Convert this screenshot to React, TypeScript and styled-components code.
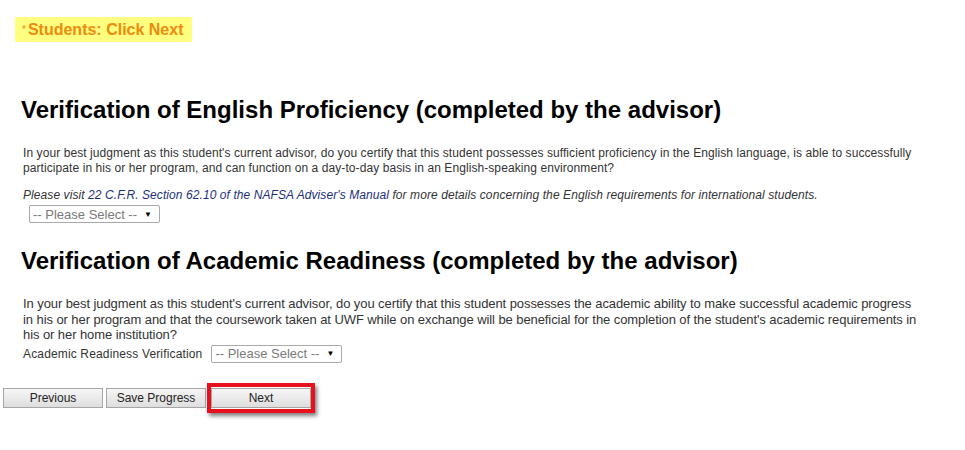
import React from "react";
import styled, { createGlobalStyle } from "styled-components";

const Global = createGlobalStyle`
  html, body { margin: 0; padding: 0; background: #fff; }
  body { font-family: "Liberation Sans", Arial, sans-serif; color: #222; }
`;

const Page = styled.div`
  width: 965px;
  height: 450px;
  box-sizing: border-box;
  padding-top: 17px;
  display: flex;
  flex-direction: column;
`;

const Banner = styled.div`
  align-self: flex-start;
  margin-left: 15px;
  height: 25px;
  width: 177px;
  box-sizing: border-box;
  padding-left: 7px;
  padding-top: 1px;
  background: #ffff80;
  color: #f08a0c;
  font-weight: bold;
  font-size: 16px;
  display: flex;
  align-items: center;
`;

const Star = styled.span`
  font-size: 10px;
  font-weight: normal;
  align-self: flex-start;
  margin-top: 6px;
  margin-right: 2px;
`;

const Section = styled.section`
  padding-left: 21px;
`;

const Heading = styled.h2<{ $top: number }>`
  margin: ${(p) => p.$top}px 0 0 0;
  font-size: 24px;
  line-height: 28px;
  font-weight: bold;
  color: #000;
`;

const Para = styled.p<{ $size: number; $top: number; $lh: number; $ls: number; $w: number }>`
  margin: ${(p) => p.$top}px 0 0 2px;
  max-width: ${(p) => p.$w}px;
  font-size: ${(p) => p.$size}px;
  line-height: ${(p) => p.$lh}px;
  letter-spacing: ${(p) => p.$ls}px;
  color: #333;
`;

const Note = styled.p`
  margin: 12px 0 0 2px;
  font-size: 12px;
  line-height: 15px;
  letter-spacing: 0.08px;
  font-style: italic;
  color: #333;
`;

const Link = styled.a`
  color: #1c2f7c;
  text-decoration: none;
`;

const SelectBox = styled.div`
  width: 131px;
  height: 18px;
  box-sizing: border-box;
  border: 1px solid #a9a9a9;
  border-radius: 2px;
  background: #fff;
  display: flex;
  align-items: center;
  justify-content: space-between;
  padding: 0 7px 0 3px;
  font-size: 13px;
  color: #7a7a7a;
`;

const Arrow = styled.span`
  font-size: 8px;
  color: #000;
`;

const SelectRow = styled.div<{ $left: number; $top: number }>`
  margin: ${(p) => p.$top}px 0 0 ${(p) => p.$left}px;
  display: flex;
  align-items: center;
  gap: 9px;
`;

const Label = styled.span`
  font-size: 12px;
  letter-spacing: 0.15px;
  color: #333;
`;

const Buttons = styled.div`
  margin: 20px 0 0 3px;
  display: flex;
  align-items: center;
  gap: 3px;
`;

const Button = styled.button`
  width: 100px;
  height: 20px;
  box-sizing: border-box;
  border: 1px solid #a6a6a6;
  border-radius: 0;
  background: linear-gradient(#f6f6f6, #dedede);
  font-family: "Liberation Sans", Arial, sans-serif;
  font-size: 12px;
  color: #222;
  padding: 0;
`;

const Highlight = styled.div`
  margin-left: -2px;
  padding: 1px 0;
  border: 4px solid #e8101c;
  box-shadow: 2px 3px 4px rgba(0, 0, 0, 0.5);
  display: flex;
`;

function Select() {
  return (
    <SelectBox>
      <span>-- Please Select --</span>
      <Arrow>▼</Arrow>
    </SelectBox>
  );
}

export default function App() {
  return (
    <>
      <Global />
      <Page>
        <Banner>
          <Star>*</Star>Students: Click Next
        </Banner>
        <Section>
          <Heading $top={54}>Verification of English Proficiency (completed by the advisor)</Heading>
          <Para $size={12} $top={22} $lh={15} $ls={0.08} $w={905}>
            In your best judgment as this student's current advisor, do you certify that this student possesses sufficient proficiency in the English language, is able to successfully participate in his or her program, and can function on a day-to-day basis in an English-speaking environment?
          </Para>
          <Note>
            Please visit <Link>22 C.F.R. Section 62.10 of the NAFSA Adviser's Manual</Link> for more details concerning the English requirements for international students.
          </Note>
        </Section>
        <SelectRow $left={29} $top={2}>
          <Select />
        </SelectRow>
        <Section>
          <Heading $top={24}>Verification of Academic Readiness (completed by the advisor)</Heading>
          <Para $size={13} $top={21} $lh={15.5} $ls={-0.08} $w={899}>
            In your best judgment as this student's current advisor, do you certify that this student possesses the academic ability to make successful academic progress in his or her program and that the coursework taken at UWF while on exchange will be beneficial for the completion of the student's academic requirements in his or her home institution?
          </Para>
        </Section>
        <SelectRow $left={23} $top={2}>
          <Label>Academic Readiness Verification</Label>
          <Select />
        </SelectRow>
        <Buttons>
          <Button>Previous</Button>
          <Button>Save Progress</Button>
          <Highlight>
            <Button>Next</Button>
          </Highlight>
        </Buttons>
      </Page>
    </>
  );
}
